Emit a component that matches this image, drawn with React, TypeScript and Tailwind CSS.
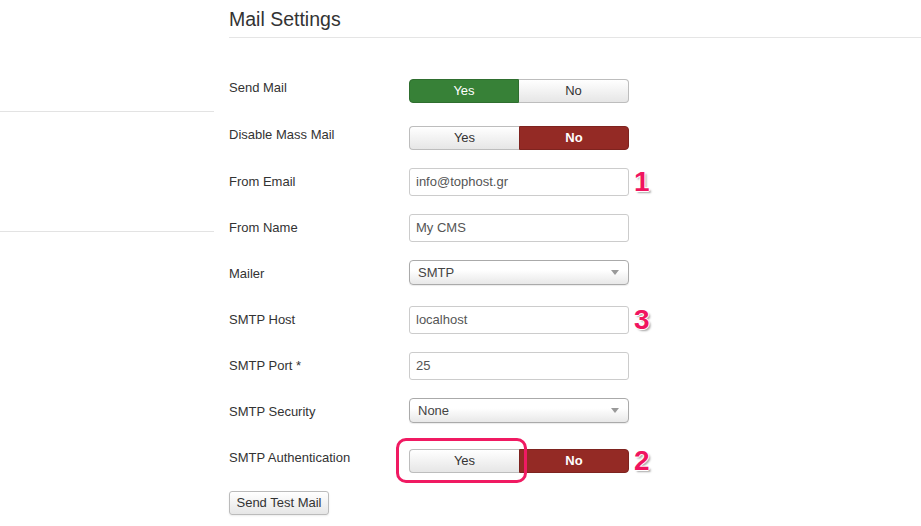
import React from "react";

const font = { fontFamily: '"Liberation Sans", Arial, sans-serif' };

function Toggle({ active }: { active: "yes" | "no" }) {
  const off =
    "bg-gradient-to-b from-white to-[#e6e6e6] text-[#333] border border-[#bdbdbd]";
  return (
    <div className="flex h-[24px] w-[220px] text-[13px] leading-[18px]">
      <div
        className={`flex w-[110px] items-center justify-center rounded-l-[4px] ${
          active === "yes"
            ? "bg-[#378137] text-white border border-[#2f6e2f]"
            : off + " border-r-0"
        }`}
      >
        Yes
      </div>
      <div
        className={`flex w-[110px] items-center justify-center rounded-r-[4px] ${
          active === "no"
            ? "bg-[#942a25] text-white font-bold border border-[#7e231f]"
            : off + " border-l-0"
        }`}
      >
        No
      </div>
    </div>
  );
}

function Input({ value }: { value: string }) {
  return (
    <div className="flex h-[28px] w-[220px] items-center rounded-[3px] border border-[#ccc] bg-white pl-[6px] text-[13px] text-[#555]">
      {value}
    </div>
  );
}

function Select({ value }: { value: string }) {
  return (
    <div className="flex h-[25px] w-[220px] items-center justify-between rounded-[4px] border border-[#aaa] bg-gradient-to-b from-white from-40% to-[#e8e8e8] pl-[8px] pr-[9px] text-[13px] text-[#444] shadow-[0_1px_1px_rgba(0,0,0,0.08)]">
      <span>{value}</span>
      <svg width="8" height="5" viewBox="0 0 8 5">
        <path d="M0 0 L8 0 L4 5 Z" fill="#999" />
      </svg>
    </div>
  );
}

function Num({ n }: { n: string }) {
  return (
    <span
      className="ml-[5px] h-[24px] text-[28px] font-bold leading-[24px] text-[#f0145f]"
      style={{
        textShadow:
          "1px 0 0 #fff, -1px 0 0 #fff, 0 1px 0 #fff, 0 -1px 0 #fff, 2px 2px 2px rgba(0,0,0,0.35)",
      }}
    >
      {n}
    </span>
  );
}

function Label({ children, mt }: { children: React.ReactNode; mt: string }) {
  return (
    <div className={`w-[180px] shrink-0 text-[13px] leading-[18px] text-[#333] ${mt}`}>
      {children}
    </div>
  );
}

export default function App() {
  return (
    <div className="flex h-[526px] w-[921px] overflow-hidden bg-white" style={font}>
      <div className="w-[214px] shrink-0">
        <div className="h-[112px] border-b border-[#e3e3e3]" />
        <div className="h-[120px] border-b border-[#e3e3e3]" />
      </div>
      <div className="ml-[15px] flex-1">
        <div className="mt-[8px] border-b border-[#e5e5e5] pb-[7px] text-[19.5px] leading-[22px] text-[#333]">
          Mail Settings
        </div>
        <div className="mt-[40px] flex flex-col">
          <div className="flex h-[47px] items-start">
            <Label mt="mt-[1px]">Send Mail</Label>
            <div className="mt-[1px]">
              <Toggle active="yes" />
            </div>
          </div>
          <div className="flex h-[43px] items-start">
            <Label mt="mt-[1px]">Disable Mass Mail</Label>
            <div className="mt-[1px]">
              <Toggle active="no" />
            </div>
          </div>
          <div className="flex h-[46px] items-start">
            <Label mt="mt-[5px]">From Email</Label>
            <div className="flex items-center">
              <Input value="info@tophost.gr" />
              <Num n="1" />
            </div>
          </div>
          <div className="flex h-[46px] items-start">
            <Label mt="mt-[5px]">From Name</Label>
            <Input value="My CMS" />
          </div>
          <div className="flex h-[46px] items-start">
            <Label mt="mt-[5px]">Mailer</Label>
            <Select value="SMTP" />
          </div>
          <div className="flex h-[46px] items-start">
            <Label mt="mt-[5px]">SMTP Host</Label>
            <div className="flex items-center">
              <Input value="localhost" />
              <Num n="3" />
            </div>
          </div>
          <div className="flex h-[46px] items-start">
            <Label mt="mt-[5px]">SMTP Port *</Label>
            <Input value="25" />
          </div>
          <div className="flex h-[50px] items-start">
            <Label mt="mt-[5px]">SMTP Security</Label>
            <Select value="None" />
          </div>
          <div className="flex h-[43px] items-start">
            <Label mt="mt-[1px]">SMTP Authentication</Label>
            <div className="relative mt-[1px] flex items-center">
              <Toggle active="no" />
              <Num n="2" />
              <div className="pointer-events-none absolute left-[-13px] top-[-11px] h-[45px] w-[131px] rounded-[10px] border-[3px] border-[#f01a62]" />
            </div>
          </div>
          <div>
            <div className="flex h-[24px] w-[100px] items-center justify-center rounded-[3px] border border-[#bbb] bg-gradient-to-b from-white to-[#e6e6e6] text-[13px] text-[#333] shadow-[0_1px_2px_rgba(0,0,0,0.08)]">
              Send Test Mail
            </div>
          </div>
        </div>
      </div>
    </div>
  );
}
